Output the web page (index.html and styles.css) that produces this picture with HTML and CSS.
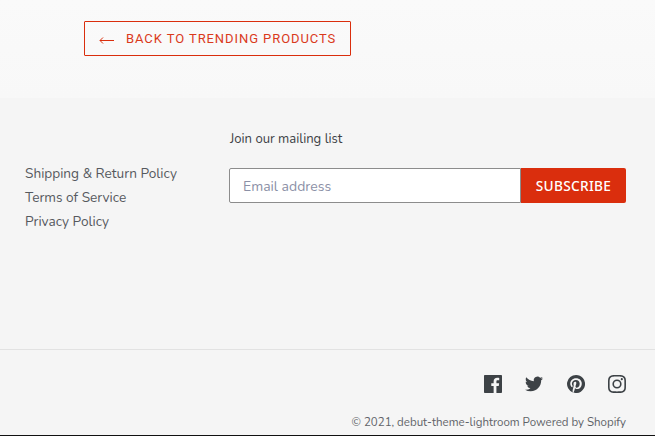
FILE: index.html
```html
<!DOCTYPE html>
<html lang="en">
<head>
  <meta charset="UTF-8" />
  <title>Footer</title>
  <link rel="stylesheet" href="styles.css">
</head>
<body>
  <div class="return-bar">
    <a class="return-link" href="#">
      <svg class="arrow" viewBox="0 0 15 7"><path d="M15 3.5H1M4 .5 1 3.5l3 3"/></svg>
      Back to trending products
    </a>
  </div>
  <footer class="footer">
    <div class="footer-top">
      <ul class="footer-links">
        <li><a href="#">Shipping &amp; Return Policy</a></li>
        <li><a href="#">Terms of Service</a></li>
        <li><a href="#">Privacy Policy</a></li>
      </ul>
      <div class="newsletter">
        <p class="newsletter-title">Join our mailing list</p>
        <form class="newsletter-form">
          <input class="email" type="email" placeholder="Email address" />
          <button class="subscribe" type="button">Subscribe</button>
        </form>
      </div>
    </div>
    <div class="footer-bottom">
      <div class="social">
        <svg class="icon" viewBox="0 0 20 20"><path d="M18.9 0H1.1C.5 0 0 .5 0 1.1v17.8c0 .6.5 1.1 1.1 1.1h9.6v-7.7H8.1v-3h2.6V7.1c0-2.6 1.6-4 3.9-4 1.1 0 2 .1 2.3.1v2.7h-1.6c-1.3 0-1.5.6-1.5 1.5v1.9h3l-.4 3h-2.6V20h5.1c.6 0 1.1-.5 1.1-1.1V1.1c0-.6-.5-1.1-1.1-1.1z"/></svg>
        <svg class="icon" viewBox="0 0 24 24"><path d="M23.95 4.57a10 10 0 0 1-2.82.77 4.96 4.96 0 0 0 2.16-2.72c-.95.55-2 .95-3.12 1.18a4.92 4.92 0 0 0-8.38 4.48C7.69 8.1 4.07 6.13 1.64 3.16a4.82 4.82 0 0 0-.67 2.48c0 1.71.87 3.21 2.19 4.1a4.9 4.9 0 0 1-2.23-.62v.06a4.92 4.92 0 0 0 3.95 4.83 5 5 0 0 1-2.21.08 4.94 4.94 0 0 0 4.6 3.42A9.87 9.87 0 0 1 0 19.54a14 14 0 0 0 7.56 2.21c9.05 0 14-7.5 14-13.98 0-.21 0-.42-.02-.63a9.94 9.94 0 0 0 2.46-2.55z"/></svg>
        <svg class="icon" viewBox="0 0 24 24"><path d="M12 0a12 12 0 0 0-4.37 23.17c-.1-.95-.2-2.4.04-3.44l1.4-5.96s-.35-.72-.35-1.78c0-1.67.96-2.9 2.17-2.9 1.02 0 1.52.76 1.52 1.68 0 1.03-.66 2.56-1 3.98-.28 1.19.6 2.16 1.77 2.16 2.13 0 3.76-2.24 3.76-5.48 0-2.87-2.06-4.87-5-4.87a5.18 5.18 0 0 0-5.4 5.19c0 1.03.39 2.13.89 2.73.1.12.11.22.08.34l-.33 1.36c-.05.22-.18.27-.4.16-1.5-.7-2.44-2.89-2.44-4.65 0-3.78 2.75-7.26 7.93-7.26 4.16 0 7.4 2.97 7.4 6.93 0 4.14-2.6 7.46-6.22 7.46-1.21 0-2.36-.63-2.75-1.38l-.75 2.85c-.27 1.04-1 2.35-1.49 3.15A12 12 0 1 0 12 0z"/></svg>
        <svg class="icon" viewBox="0 0 24 24"><path d="M12 2.16c3.2 0 3.58.01 4.85.07 1.17.05 1.8.25 2.23.41.56.22.96.48 1.38.9.42.42.68.82.9 1.38.16.42.36 1.06.41 2.23.06 1.27.07 1.65.07 4.85s-.01 3.58-.07 4.85c-.05 1.17-.25 1.8-.41 2.23-.22.56-.48.96-.9 1.38-.42.42-.82.68-1.38.9-.42.16-1.06.36-2.23.41-1.27.06-1.65.07-4.85.07s-3.58-.01-4.85-.07c-1.17-.05-1.8-.25-2.23-.41a3.7 3.7 0 0 1-1.38-.9 3.7 3.7 0 0 1-.9-1.38c-.16-.42-.36-1.06-.41-2.23-.06-1.27-.07-1.65-.07-4.85s.01-3.58.07-4.85c.05-1.17.25-1.8.41-2.23.22-.56.48-.96.9-1.38.42-.42.82-.68 1.38-.9.42-.16 1.06-.36 2.23-.41 1.27-.06 1.65-.07 4.85-.07M12 0C8.74 0 8.33.01 7.05.07 5.78.13 4.9.33 4.14.63a5.86 5.86 0 0 0-2.13 1.38A5.86 5.86 0 0 0 .63 4.14C.33 4.9.13 5.78.07 7.05.01 8.33 0 8.74 0 12s.01 3.67.07 4.95c.06 1.27.26 2.15.56 2.91.31.79.72 1.46 1.38 2.13a5.86 5.86 0 0 0 2.13 1.38c.76.3 1.64.5 2.91.56C8.33 23.99 8.74 24 12 24s3.67-.01 4.95-.07c1.27-.06 2.15-.26 2.91-.56a5.86 5.86 0 0 0 2.13-1.38 5.86 5.86 0 0 0 1.38-2.13c.3-.76.5-1.64.56-2.91.06-1.28.07-1.69.07-4.95s-.01-3.67-.07-4.95c-.06-1.27-.26-2.15-.56-2.91a5.86 5.86 0 0 0-1.38-2.13A5.86 5.86 0 0 0 19.86.63C19.1.33 18.22.13 16.95.07 15.67.01 15.26 0 12 0zm0 5.84a6.16 6.16 0 1 0 0 12.32 6.16 6.16 0 0 0 0-12.32zM12 16a4 4 0 1 1 0-8 4 4 0 0 1 0 8zm6.41-11.85a1.44 1.44 0 1 0 0 2.88 1.44 1.44 0 0 0 0-2.88z"/></svg>
      </div>
      <p class="copyright">&copy; 2021, debut-theme-lightroom Powered by Shopify</p>
    </div>
  </footer>
</body>
</html>
```

FILE: styles.css
```css
* {
  box-sizing: border-box;
}

html, body {
  margin: 0;
  height: 100%;
}

body {
  display: flex;
  flex-direction: column;
  font-family: 'Nunito', 'Lato', 'Noto Sans', sans-serif;
  color: #3d4246;
  background: #f5f5f5;
  overflow: hidden;
}

.return-bar {
  height: 98px;
  padding: 21px 0 0 84px;
  background: linear-gradient(#fafafa, #f8f8f8);
}

.return-link {
  display: inline-flex;
  align-items: center;
  width: 267px;
  height: 35px;
  padding: 0 14px;
  border: 1px solid #da2e0d;
  border-radius: 1px;
  color: #da3a1c;
  font-family: 'Roboto', sans-serif;
  font-size: 13px;
  letter-spacing: 0.92px;
  text-transform: uppercase;
  text-decoration: none;
  white-space: nowrap;
}

.arrow {
  width: 15px;
  height: 7px;
  margin: 4px 12px 0 0;
  flex: none;
  fill: none;
  stroke: #da2e0d;
  stroke-width: 1;
}

.footer {
  flex: 1;
  display: flex;
  flex-direction: column;
  border-bottom: 1px solid #111;
}

.footer-top {
  display: flex;
  height: 252px;
  padding: 0 29px 0 25px;
  border-bottom: 1px solid #e2e2e2;
}

.footer-links {
  width: 204px;
  margin: 64px 0 0;
  padding: 0;
  list-style: none;
  font-size: 13.65px;
  line-height: 24px;
}

.footer-links a {
  color: #55595e;
  text-decoration: none;
}

.newsletter {
  flex: 1;
}

.newsletter-title {
  margin: 32px 0 0;
  padding-left: 1px;
  font-size: 13.1px;
  line-height: 18px;
}

.newsletter-form {
  display: flex;
  margin-top: 20px;
}

.email {
  flex: 1;
  min-width: 0;
  height: 35px;
  padding: 2px 13px 0;
  border: 1px solid #8c8c8c;
  border-radius: 2px 0 0 2px;
  background: #fff;
  font-family: inherit;
  font-size: 14px;
}

.email::placeholder {
  color: #8b90a6;
  opacity: 1;
}

.subscribe {
  width: 105px;
  height: 35px;
  padding: 0;
  border: none;
  border-radius: 0 2px 2px 0;
  background: #da2e0d;
  color: #fff;
  font-family: 'Noto Sans', sans-serif;
  font-size: 13.7px;
  font-weight: 500;
  letter-spacing: 0.3px;
  text-transform: uppercase;
}

.footer-bottom {
  flex: 1;
  display: flex;
  flex-direction: column;
  align-items: flex-end;
  padding: 25px 29px 0 0;
}

.social {
  display: flex;
  gap: 23.3px;
}

.icon {
  width: 18px;
  height: 18px;
  fill: #3d4246;
}

.copyright {
  margin: 21px 0 0;
  font-size: 11.5px;
  line-height: 16px;
  color: #5f6368;
}
```
